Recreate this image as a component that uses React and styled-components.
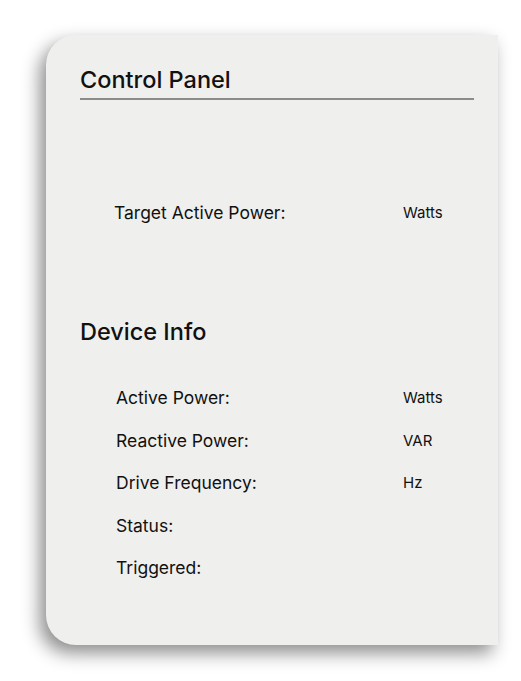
import React from 'react'
import styled, { createGlobalStyle } from 'styled-components'

const GlobalStyle = createGlobalStyle`
  html, body {
    margin: 0;
    padding: 0;
    background: #ffffff;
  }
  body {
    font-family: Inter, "Open Sans", sans-serif;
    color: #111;
  }
`

const Page = styled.div`
  width: 521px;
  height: 681px;
  overflow: hidden;
  padding: 35px 23px 0 46px;
  box-sizing: border-box;
`

const Card = styled.div`
  width: 452px;
  height: 610px;
  background: #efefed;
  border-radius: 30px 0 0 30px;
  box-shadow: -6px 8px 18px rgba(0, 0, 0, 0.45);
  padding: 31px 24px 0 34px;
  box-sizing: border-box;
`

const Heading = styled.h2`
  margin: 0;
  font-size: 23.5px;
  font-weight: 500;
  line-height: 28px;
  padding-bottom: ${props => props.underline ? '4px' : '0'};
  border-bottom: ${props => props.underline ? '2px solid #8c8c8c' : 'none'};
  margin-bottom: ${props => props.gap}px;
`

const Rows = styled.div`
  display: flex;
  flex-direction: column;
  padding-left: ${props => props.indent}px;
  margin-bottom: ${props => props.after || 0}px;
`

const Row = styled.div`
  display: grid;
  grid-template-columns: ${props => props.labelWidth}px 1fr;
  align-items: center;
  height: 42.5px;
`

const Label = styled.span`
  font-size: 17.5px;
`

const Unit = styled.span`
  font-size: 15px;
`

const deviceRows = [
  { label: 'Active Power:', unit: 'Watts' },
  { label: 'Reactive Power:', unit: 'VAR' },
  { label: 'Drive Frequency:', unit: 'Hz' },
  { label: 'Status:', unit: '' },
  { label: 'Triggered:', unit: '' },
]

export default function App() {
  return (
    <>
      <GlobalStyle />
      <Page>
        <Card>
          <Heading underline gap={91}>Control Panel</Heading>
          <Rows indent={34} after={84}>
            <Row labelWidth={289}>
              <Label>Target Active Power:</Label>
              <Unit>Watts</Unit>
            </Row>
          </Rows>
          <Heading gap={31}>Device Info</Heading>
          <Rows indent={36}>
            {deviceRows.map((r, i) => (
              <Row key={i} labelWidth={287}>
                <Label>{r.label}</Label>
                <Unit>{r.unit}</Unit>
              </Row>
            ))}
          </Rows>
        </Card>
      </Page>
    </>
  )
}
